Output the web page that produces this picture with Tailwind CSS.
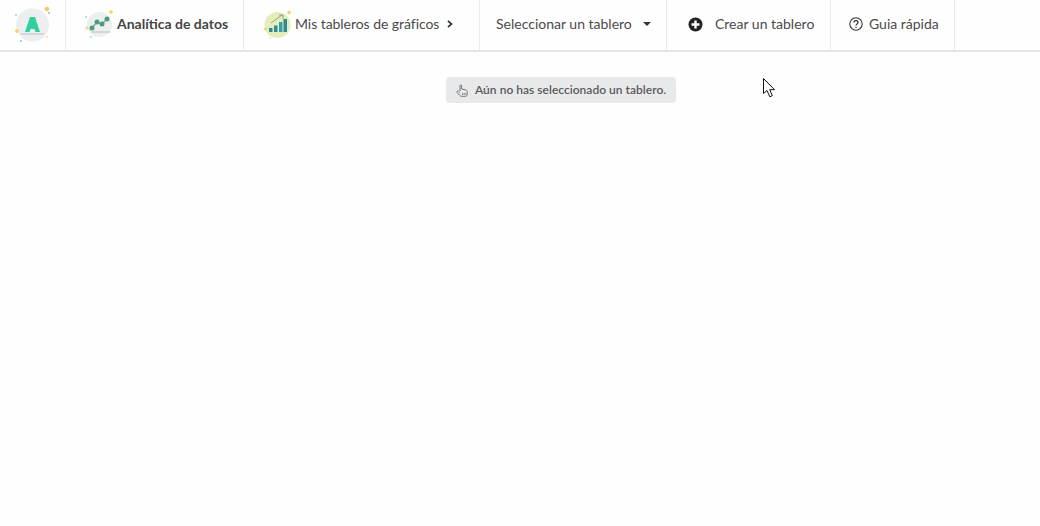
<!DOCTYPE html>
<html lang="es">
<head>
<meta charset="utf-8">
<title>Analítica de datos</title>
<script src="https://cdn.jsdelivr.net/npm/@tailwindcss/browser@4"></script>
</head>
<body class="bg-[#fefefe] font-['Lato',sans-serif] text-[#454545]">
<div class="relative h-[526px] w-[1040px] overflow-hidden">
  <nav class="flex h-[52px] items-stretch border-b-2 border-[#e4e5e6] bg-[#fefefe] text-[14px] leading-[20px]">
    <a class="flex w-[66px] shrink-0 items-center border-r border-[#e9eaeb] pb-[2px] pl-[13px]">
      <svg width="40" height="42" viewBox="0 0 40 42" class="blur-[0.4px]">
        <circle cx="19.500" cy="22" r="16.500" fill="#eceef0"/>
        <path d="M12 29 L17 14 H22 L27 29 H22.500 L21.500 26 H17.500 L16.500 29 Z" fill="#34cfa0"/>
        <path d="M8 31 H31" stroke="#aab2b6" stroke-width="0.800"/>
        <circle cx="34" cy="6" r="2.200" fill="#f8c94f"/><circle cx="36" cy="10" r="0.900" fill="#5fd3b6"/>
        <circle cx="4" cy="28" r="2" fill="#f8d27a"/><circle cx="3" cy="12" r="1" fill="#8ed9cf"/>
        <circle cx="8" cy="38" r="0.900" fill="#5fd3b6"/><circle cx="34" cy="34" r="0.900" fill="#f8d27a"/>
      </svg>
    </a>
    <a class="flex w-[178px] shrink-0 items-center border-r border-[#e9eaeb] pb-[2px] pl-[18px]">
      <svg width="33" height="30" viewBox="0 0 33 30" class="blur-[0.4px]">
        <circle cx="15.500" cy="15.500" r="12.500" fill="#eceef0"/>
        <path d="M8 19 L13 13 L18 15 L23 10" fill="none" stroke="#6aa892" stroke-width="1.200"/>
        <circle cx="8" cy="19" r="2.500" fill="#4f9a80"/><circle cx="13" cy="13" r="2.500" fill="#4f9a80"/><circle cx="18" cy="15" r="2.500" fill="#4f9a80"/><circle cx="23" cy="10" r="2.500" fill="#4f9a80"/>
        <path d="M8 23 H26" stroke="#a9afb2" stroke-width="0.800"/>
        <circle cx="27" cy="3" r="1.800" fill="#f8d060"/><circle cx="3" cy="19" r="1.500" fill="#f8d27a"/><circle cx="2" cy="8" r="0.900" fill="#8ed9cf"/><circle cx="7" cy="28" r="0.800" fill="#5fd3b6"/>
      </svg>
      <span class="font-bold">Analítica de datos</span>
    </a>
    <a class="flex w-[236px] shrink-0 items-center border-r border-[#e9eaeb] pb-[2px] pl-[20px]">
      <svg width="29" height="30" viewBox="0 0 29 30" class="mr-[2px] shrink-0 blur-[0.3px]">
        <circle cx="13.500" cy="16" r="13" fill="#e3eebb"/>
        <path d="M7 14 L18 6" stroke="#8a9a80" stroke-width="0.900"/><path d="M15 6 H19 V10" fill="none" stroke="#8a9a80" stroke-width="0.900"/>
        <rect x="5" y="19" width="3.500" height="4" fill="#2e8a96"/><rect x="10" y="16.500" width="3.500" height="6.500" fill="#2e8a96"/><rect x="15" y="13" width="3.500" height="10" fill="#35a0ab"/><rect x="19.500" y="10" width="3.500" height="13" fill="#2e8a96"/>
        <circle cx="25" cy="3.500" r="1.800" fill="#f8d060"/><circle cx="1.500" cy="20" r="1.500" fill="#f8d060"/><circle cx="6" cy="29" r="0.800" fill="#d9dc90"/>
      </svg>
      <span class="tracking-[-0.05px] text-[#4a4a4a]">Mis tableros de gráficos</span>
      <svg width="6" height="8" viewBox="0 0 6 8" class="ml-[8px]"><path d="M1 .8 L4.500 4 L1 7.200" fill="none" stroke="#333" stroke-width="1.700"/></svg>
    </a>
    <a class="flex w-[187px] shrink-0 items-center border-r border-[#e9eaeb] pb-[2px] pl-[16px]">
      <span class="text-[#4a4a4a]">Seleccionar un tablero</span>
      <svg width="8" height="4" viewBox="0 0 8 4" class="ml-[11px]"><path d="M0 0 H8 L4 4 Z" fill="#333"/></svg>
    </a>
    <a class="flex w-[164px] shrink-0 items-center border-r border-[#e9eaeb] pb-[2px] pl-[21px]">
      <svg width="15" height="15" viewBox="0 0 15 15" class="mr-[12px]"><circle cx="7.500" cy="7.500" r="7" fill="#222"/><path d="M7.500 3.500 V11.500 M3.500 7.500 H11.500" stroke="#fff" stroke-width="2.400"/></svg>
      <span class="text-[#4a4a4a]">Crear un tablero</span>
    </a>
    <a class="flex w-[124px] shrink-0 items-center border-r border-[#e9eaeb] pb-[2px] pl-[18px]">
      <svg width="14" height="14" viewBox="0 0 14 14" class="mr-[6px]" fill="none" stroke="#333"><circle cx="7" cy="7" r="6.200" stroke-width="1.100"/><path d="M5 5.400 C5 3 9 3 9 5.400 C9 7 7 6.800 7 8.500" stroke-width="1.200"/><path d="M7 9.700 V11" stroke-width="1.300"/></svg>
      <span class="text-[#4a4a4a]">Guia rápida</span>
    </a>
  </nav>
  <main class="pt-[25px] pl-[446px]">
    <div class="flex h-[26px] w-[230px] items-center rounded-[4px] bg-[#e8e9ea] pl-[10px] text-[12px] font-semibold text-[#5a5a5a]">
      <svg width="12" height="13" viewBox="0 0 12 13" class="mr-[7px] shrink-0" fill="none" stroke="#777" stroke-width="1"><path d="M4 7 V1.800 C4 .6 5.600 .6 5.600 1.800 V5 L10 6 C11 6.300 11.200 7 11.200 8 V10.500 C11.200 11.500 10.500 12.300 9.500 12.300 H5.500 C4.800 12.300 4.300 12 3.900 11.500 L1 8.500 C.4 7.600 1.500 6.500 2.500 7.200 L4 8.500"/><path d="M6.500 9 V11 M8.200 9 V11 M9.800 9 V11" stroke-width=".8"/></svg>
      <span class="tracking-[0.02px]">Aún no has seleccionado un tablero.</span>
    </div>
  </main>
  <svg class="absolute left-[763px] top-[78px]" width="13" height="20" viewBox="0 0 13 20"><path d="M.5 .5 V15.500 L4 12.500 L6.800 18.800 L9.300 17.700 L6.700 11.700 H11.500 Z" fill="#fff" stroke="#111" stroke-width="1"/></svg>
</div>
</body>
</html>
